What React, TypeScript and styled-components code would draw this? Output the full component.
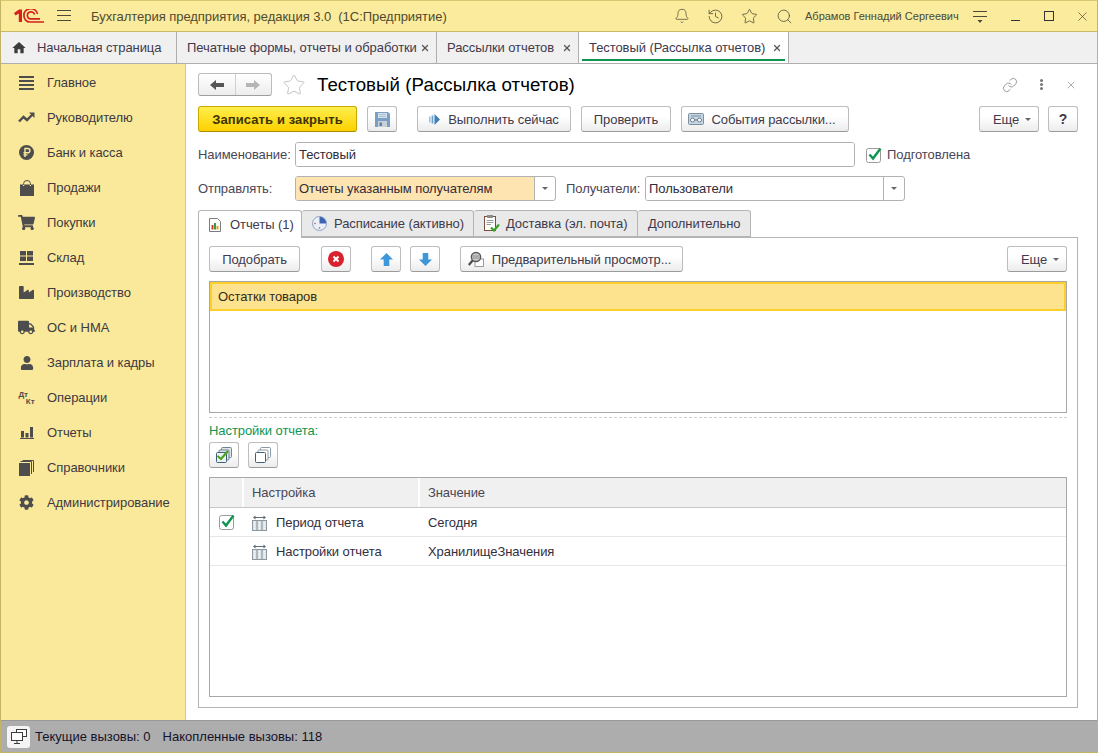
import React from "react";
import styled, { createGlobalStyle } from "styled-components";
import { Bell, History, Star, Search, Link, X } from "lucide-react";
import { FaCog, FaIndustry, FaShoppingCart, FaTruck, FaUser } from "react-icons/fa";
import { MdHome } from "react-icons/md";

const GlobalStyle = createGlobalStyle`
  html, body { margin: 0; padding: 0; background: #fff; }
  body { font-family: "Liberation Sans", Arial, sans-serif; font-size: 13px; letter-spacing: -0.08px; color: #3c3c3c; }
  * { box-sizing: border-box; }
`;

// Small drawings
const Logo1C = () => (
  <svg width="30" height="14" viewBox="0 0 30 14" fill="none">
    <path d="M0 4L5 0.5H8V13H4.8V4.6L1.5 6.6Z" fill="#d4231e" />
    <path d="M23.5 5A6 5.4 0 0 0 10 6.5A6 6 0 0 0 16 13H30" stroke="#d4231e" strokeWidth="1.7" />
    <path d="M20.6 5.5A3.2 2.8 0 0 0 13.4 6.5A3 3.2 0 0 0 16.5 9.8H26" stroke="#d4231e" strokeWidth="1.7" />
  </svg>
);

const Burger = () => (
  <svg width="14" height="12" viewBox="0 0 14 12">
    <path d="M0 .5H14M0 5.5H14M0 10.5H14" stroke="#4a4a3a" />
  </svg>
);

const FilterIcon = () => (
  <svg width="16" height="15" viewBox="0 0 16 15">
    <path d="M1 2.5H15M1 7.5H15" stroke="#4a4a3a" />
    <path d="M5.5 11H10.5L8 14Z" fill="#4a4a3a" />
  </svg>
);

const MenuIcon = () => (
  <svg width="15" height="14" viewBox="0 0 15 14" fill="#4d4d4d">
    <rect y="0" width="15" height="2" /><rect y="4" width="15" height="2" />
    <rect y="8" width="15" height="2" /><rect y="12" width="15" height="2" />
  </svg>
);

const TrendIcon = () => (
  <svg width="17" height="11" viewBox="0 0 17 11" fill="none">
    <path d="M1 9.5L5.5 5L9 8L14.5 2.5" stroke="#4d4d4d" strokeWidth="2.4" />
    <path d="M11 .5H16.5V6Z" fill="#4d4d4d" />
  </svg>
);

const RubleIcon = () => (
  <svg width="15" height="15" viewBox="0 0 15 15">
    <circle cx="7.5" cy="7.5" r="7.5" fill="#4d4d4d" />
    <path d="M6 12V3.5H8.8A2.1 2.1 0 0 1 8.8 7.8H4.5M4.5 9.9H8.5" stroke="#fbe99b" strokeWidth="1.4" fill="none" />
  </svg>
);

const BagIcon = () => (
  <svg width="14" height="16" viewBox="0 0 14 16">
    <path d="M0 4.5H3V6H4.2V4.5H9.8V6H11V4.5H14V16H0Z" fill="#4d4d4d" />
    <path d="M3.6 5V3.5A3.4 3 0 0 1 10.4 3.5V5" stroke="#4d4d4d" fill="none" />
  </svg>
);

const StockIcon = () => (
  <svg width="15" height="14" viewBox="0 0 15 14" fill="#4d4d4d">
    <rect x="1" y="0" width="6" height="4.5" /><rect x="8" y="0" width="6" height="4.5" />
    <rect x="1" y="5.5" width="6" height="4.5" /><rect x="8" y="5.5" width="6" height="4.5" />
    <rect x="0" y="12" width="15" height="2" />
  </svg>
);

const BarsIcon = () => (
  <svg width="14" height="12" viewBox="0 0 14 12" fill="#4d4d4d">
    <rect x="1" y="4" width="3" height="6.5" /><rect x="5.5" y="6" width="3" height="4.5" />
    <rect x="10" y="0" width="3" height="10.5" /><rect x="0" y="11" width="14" height="1" />
  </svg>
);

const PagesIcon = () => (
  <svg width="15" height="16" viewBox="0 0 15 16" fill="none">
    <rect x="0" y="3" width="11" height="13" fill="#4d4d4d" />
    <path d="M1.5 1.5H12.5V14M3.5 .5H14.5V12" stroke="#4d4d4d" />
  </svg>
);

const Floppy = () => (
  <svg width="15" height="15" viewBox="0 0 15 15">
    <path d="M0 0H13L15 2V15H0Z" fill="#7a9fc4" />
    <rect x="3" y="1" width="9" height="5" fill="#d6e2ee" />
    <path d="M4 2.5H11M4 4.5H11" stroke="#a9bfd4" />
    <rect x="3" y="9" width="9" height="6" fill="#c9d0d6" />
    <rect x="4.5" y="10.5" width="2.5" height="3.5" fill="#5f82a6" />
  </svg>
);

const RunIcon = () => (
  <svg width="11" height="11" viewBox="0 0 11 11">
    <rect x="0" y="2.5" width="1.6" height="6" fill="#9cc0de" />
    <rect x="2.6" y="1.5" width="1.8" height="8" fill="#6ea3cf" />
    <path d="M5.5 0L11 5.5L5.5 11Z" fill="#3f7fb8" />
  </svg>
);

const EventsIcon = () => (
  <svg width="16" height="12" viewBox="0 0 16 12">
    <rect x=".5" y=".5" width="15" height="11" rx="1" fill="#c5d6e4" stroke="#7d8e9c" />
    <path d="M3 3H13" stroke="#7d8e9c" />
    <circle cx="4.5" cy="7" r="2" fill="#fff" stroke="#6a7a88" />
    <circle cx="11.5" cy="7" r="2" fill="#fff" stroke="#6a7a88" />
    <path d="M6.5 7H9.5" stroke="#6a7a88" />
  </svg>
);

const DeleteIcon = () => (
  <svg width="16" height="16" viewBox="0 0 16 16">
    <circle cx="8" cy="8" r="8" fill="#d8202f" />
    <path d="M5.5 5.5L10.5 10.5M10.5 5.5L5.5 10.5" stroke="#fff" strokeWidth="2" />
  </svg>
);

const ArrowIcon = ({ down }: { down?: boolean }) => (
  <svg width="13" height="13" viewBox="0 0 14 14">
    <path
      d={down ? "M4 0H10V7H14L7 14L0 7H4Z" : "M4 14H10V7H14L7 0L0 7H4Z"}
      fill="#3d97d8"
    />
  </svg>
);

const PreviewIcon = () => (
  <svg width="16" height="16" viewBox="0 0 16 16" fill="none">
    <rect x="7" y="8" width="8.5" height="7.5" fill="#fff" stroke="#9a9a9a" />
    <circle cx="8" cy="6" r="4.6" fill="#c9ccce" stroke="#5a5a5a" strokeWidth="1.5" />
    <path d="M4.6 9.5L.8 14" stroke="#4a4a4a" strokeWidth="2.2" />
    <path d="M5 5H11M5 7H11" stroke="#8a8a8a" />
  </svg>
);

const CheckStack = () => (
  <svg width="16" height="16" viewBox="0 0 16 16" fill="none">
    <rect x="5.5" y=".5" width="10" height="10" rx="1" fill="#dfe6ea" stroke="#6e8493" />
    <rect x="3" y="3" width="10" height="10" rx="1" fill="#dfe6ea" stroke="#6e8493" />
    <rect x=".5" y="5.5" width="10" height="10" rx="1" fill="#eef2f4" stroke="#3f6076" />
    <path d="M1.5 9L5 12L12 4" stroke="#4aa51d" strokeWidth="2.2" />
  </svg>
);

const EmptyStack = () => (
  <svg width="16" height="16" viewBox="0 0 16 16" fill="#fff">
    <rect x="5.5" y=".5" width="10" height="10" rx="1" stroke="#8a9aa6" />
    <rect x="3" y="3" width="10" height="10" rx="1" stroke="#8a9aa6" />
    <rect x=".5" y="5.5" width="10" height="10" rx="1" stroke="#3f6076" />
  </svg>
);

const ReportTab = () => (
  <svg width="12" height="14" viewBox="0 0 12 14">
    <path d="M.5.5H8.5L11.5 3.5V13.5H.5Z" fill="#fff" stroke="#7c7c7c" />
    <rect x="2.5" y="7" width="2" height="4.5" fill="#d33a2c" />
    <rect x="5" y="5" width="2" height="6.5" fill="#3b9b3f" />
    <rect x="7.5" y="8" width="2" height="3.5" fill="#d8a520" />
  </svg>
);

const ClockTab = () => (
  <svg width="15" height="15" viewBox="0 0 15 15">
    <circle cx="7.5" cy="7.5" r="7" fill="#eaf0f8" stroke="#8da3c6" />
    <path d="M7.5 7.5V.7A6.8 6.8 0 0 1 14.3 7.5Z" fill="#3e63b3" />
    <circle cx="3" cy="7.5" r=".8" fill="#d0424a" />
    <circle cx="7.5" cy="12" r=".8" fill="#d0424a" />
  </svg>
);

const ClipboardTab = () => (
  <svg width="16" height="17" viewBox="0 0 16 17">
    <rect x=".5" y="1.5" width="11" height="14" fill="#fff" stroke="#7a4f3a" />
    <rect x="3" y="0" width="6" height="3" fill="#8c8c8c" />
    <path d="M2.5 5.5H9.5M2.5 7.5H9.5M2.5 9.5H7" stroke="#9a9a9a" />
    <path d="M7 12.5L10 15.5L15 9.5" stroke="#3ba22b" strokeWidth="2.2" fill="none" />
  </svg>
);

const TickBox = () => (
  <svg width="17" height="17" viewBox="0 0 17 17" fill="none">
    <rect x=".5" y="2.5" width="14" height="14" rx="2" fill="#fff" stroke="#9a9a9a" />
    <path d="M3.5 8.5L7 12.5L14.5 2.5" stroke="#0f9550" strokeWidth="2.4" />
  </svg>
);

const ParamIcon = () => (
  <svg width="15" height="16" viewBox="0 0 15 16" fill="none">
    <path d="M2 2.5H13" stroke="#5c6c78" />
    <path d="M1 2.5L3.5 .5V4.5ZM14 2.5L11.5 .5V4.5Z" fill="#5c6c78" />
    <rect x=".5" y="5.5" width="14" height="10" fill="#dfe3e6" stroke="#8d9aa3" />
    <path d="M5 5.5V15.5M10 5.5V15.5" stroke="#7f8c95" />
    <path d="M2.7 7V15M7.5 7V15M12.3 7V15" stroke="#fff" strokeDasharray="1 1" />
  </svg>
);

const ScreensIcon = () => (
  <svg width="16" height="15" viewBox="0 0 16 15" fill="#fff" stroke="#3c3c3c">
    <rect x="5.5" y=".5" width="10" height="7" />
    <rect x=".5" y="3.5" width="11" height="8" />
    <path d="M6 11.5V14M3 14.5H9" />
  </svg>
);

const Caret = () => (
  <svg width="6" height="3" viewBox="0 0 6 3">
    <path d="M0 0H6L3 3Z" fill="#666" />
  </svg>
);

// Layout
const Page = styled.div`
  width: 1098px;
  height: 753px;
  display: flex;
  flex-direction: column;
  overflow: hidden;
  border: 1px solid #c3b463;
  border-top-color: #d8c871;
`;

const TitleBar = styled.header`
  height: 31px;
  flex: none;
  display: flex;
  align-items: center;
  background: #fbeb9c;
  border-bottom: 1px solid #c9b864;
  padding-left: 13px;
  color: #4a4a3a;
`;

const MenuToggle = styled.span`
  margin-left: 13px;
  display: flex;
`;

const AppName = styled.span`
  margin-left: 20px;
  font-size: 13px;
  letter-spacing: -0.04px;
  color: #504a30;
`;

const TitleTools = styled.div`
  margin-left: auto;
  display: flex;
  align-items: center;
`;

const TitleTool = styled.span<{ $w: number }>`
  width: ${(p) => p.$w}px;
  display: flex;
  justify-content: center;
  align-items: center;
`;

const UserName = styled.span`
  width: 170px;
  padding-left: 3px;
  font-size: 11px;
  letter-spacing: 0;
  color: #4a4a3a;
`;

const WinButtons = styled.div`
  display: flex;
  align-items: center;
  gap: 13.5px;
  margin-left: 17px;
  margin-right: 5px;
`;

const WinButton = styled.span`
  width: 20px;
  height: 20px;
  display: flex;
  align-items: center;
  justify-content: center;
`;

const TabBar = styled.nav`
  height: 32px;
  flex: none;
  display: flex;
  background: #f0f0f0;
  border-bottom: 1px solid #aeaeae;
`;

const OpenTab = styled.div<{ $w: number; $active?: boolean }>`
  position: relative;
  width: ${(p) => p.$w}px;
  display: flex;
  align-items: center;
  padding-left: 10px;
  white-space: nowrap;
  border-right: 1px solid #aeaeae;
  color: #403a4c;
  font-size: 13px;
  background: ${(p) => (p.$active ? "#fff" : "transparent")};
  ${(p) =>
    p.$active &&
    `&::after { content: ""; position: absolute; left: 3px; right: 3px; bottom: 2px; height: 2px; background: #0f9550; }`}
`;

const HomeLabel = styled.span`
  margin-left: 10px;
`;

const TabClose = styled.span`
  margin-left: auto;
  margin-right: 6px;
  display: flex;
`;

const Body = styled.div`
  flex: 1;
  min-height: 0;
  display: flex;
`;

const Sidebar = styled.aside`
  width: 185px;
  flex: none;
  background: #fbe99b;
  border-right: 1px solid #d8c871;
  padding-top: 1px;
`;

const SideItem = styled.div`
  height: 35px;
  display: flex;
  align-items: center;
  color: #3d3a42;
  font-size: 13px;
`;

const SideIcon = styled.span`
  width: 46px;
  padding-left: 5px;
  display: flex;
  justify-content: center;
  align-items: center;
  color: #4d4d4d;
`;

const DebitCredit = styled.span`
  display: flex;
  flex-direction: column;
  font-size: 8px;
  line-height: 7px;
  font-weight: bold;
  width: 16px;
  span:last-child { align-self: flex-end; }
`;

const Main = styled.main`
  flex: 1;
  min-width: 0;
  display: flex;
  flex-direction: column;
  padding: 9px 19px 12px 12px;
  background: #fff;
`;

const FormHeader = styled.div`
  height: 23px;
  display: flex;
  align-items: center;
  margin-bottom: 10px;
`;

const NavGroup = styled.div`
  width: 74px;
  height: 23px;
  display: flex;
  border: 1px solid #bcbcbc;
  border-bottom-color: #9d9d9d;
  border-radius: 3px;
  background: linear-gradient(#fff, #ededed);
`;

const NavPart = styled.span<{ $right?: boolean }>`
  flex: 1;
  display: flex;
  align-items: center;
  justify-content: center;
  border-left: ${(p) => (p.$right ? "1px solid #d0d0d0" : "none")};
`;

const FormTitle = styled.h1`
  margin: 0 0 0 1px;
  font-size: 18.67px;
  font-weight: normal;
  color: #000;
  letter-spacing: 0.07px;
`;

const FormTools = styled.div`
  margin-left: auto;
  display: flex;
  align-items: center;
  color: #777;
`;

const FormTool = styled.span<{ $w: number }>`
  width: ${(p) => p.$w}px;
  display: flex;
  justify-content: center;
`;

const Dots = styled.span`
  width: 3px;
  height: 3px;
  background: #777;
  box-shadow: 0 -4px 0 #777, 0 4px 0 #777;
  border-radius: 50%;
`;

const Toolbar = styled.div`
  height: 26px;
  flex: none;
  display: flex;
  gap: 10px;
`;

const Btn = styled.button<{ $w: number; $ml?: string; $pr?: number }>`
  width: ${(p) => p.$w}px;
  height: 26px;
  flex: none;
  padding: 0 ${(p) => p.$pr || 0}px 0 0;
  margin-left: ${(p) => p.$ml || "0"};
  display: flex;
  align-items: center;
  justify-content: center;
  gap: 8px;
  font-family: inherit;
  font-size: 13px;
  letter-spacing: inherit;
  color: #403a4c;
  border: 1px solid #bdbdbd;
  border-bottom-color: #9b9b9b;
  border-radius: 3px;
  background: linear-gradient(#fff 40%, #ececec);
`;

const PrimaryBtn = styled(Btn)`
  font-weight: bold;
  letter-spacing: 0.1px;
  color: #3d3300;
  border-color: #c9a800;
  border-bottom-color: #a88c00;
  background: linear-gradient(#ffee4d, #fdd100);
`;

const MoreBtn = styled(Btn)`
  padding-left: 6px;
  gap: 6px;
`;

const HelpMark = styled.span`
  font-weight: bold;
  font-size: 14px;
`;

const FieldRow = styled.div`
  height: 25px;
  flex: none;
  display: flex;
  align-items: center;
  margin-top: 10px;
`;

const FieldRowNext = styled(FieldRow)`
  margin-top: 9px;
`;

const FieldLabel = styled.span<{ $w: number; $ml?: number }>`
  width: ${(p) => p.$w}px;
  margin-left: ${(p) => p.$ml || 0}px;
  flex: none;
  color: #4a4656;
  white-space: nowrap;
`;

const Input = styled.div<{ $w: number }>`
  width: ${(p) => p.$w}px;
  height: 25px;
  flex: none;
  display: flex;
  align-items: stretch;
  border: 1px solid #b2b2b2;
  border-radius: 3px;
  overflow: hidden;
  background: #fff;
`;

const InputValue = styled.span<{ $bg?: string }>`
  flex: 1;
  display: flex;
  align-items: center;
  padding-left: 3px;
  color: #302c3a;
  background: ${(p) => p.$bg || "#fff"};
`;

const DropBtn = styled.span`
  width: 21px;
  display: flex;
  align-items: center;
  justify-content: center;
  border-left: 1px solid #b2b2b2;
`;

const CheckWrap = styled.span`
  margin-left: 11px;
  display: flex;
  align-items: center;
  gap: 4px;
  color: #4a4656;
`;

const FormTabs = styled.div`
  height: 27px;
  flex: none;
  margin-top: 9px;
  display: flex;
`;

const FormTab = styled.div<{ $w: number; $gap?: number; $active?: boolean }>`
  width: ${(p) => p.$w}px;
  height: ${(p) => (p.$active ? 28 : 27)}px;
  display: flex;
  align-items: center;
  gap: ${(p) => p.$gap ?? 8}px;
  padding-left: 10px;
  color: #403a4c;
  background: ${(p) => (p.$active ? "#fff" : "#e9e9e9")};
  border: 1px solid #b4b4b4;
  border-left-width: ${(p) => (p.$active ? 1 : 0)}px;
  border-bottom-width: ${(p) => (p.$active ? 0 : 1)}px;
  border-radius: 3px 3px 0 0;
  position: relative;
  z-index: ${(p) => (p.$active ? 1 : 0)};
`;

const Panel = styled.section`
  flex: 1;
  min-height: 0;
  display: flex;
  flex-direction: column;
  border: 1px solid #b4b4b4;
  padding: 8px 10px 10px;
`;

const ListTable = styled.div`
  height: 132px;
  flex: none;
  margin-top: 9px;
  border: 1px solid #a8a8a8;
`;

const SelectedRow = styled.div`
  height: 29px;
  display: flex;
  align-items: center;
  padding-left: 6px;
  background: #fee38e;
  border: 2px solid #fccf2c;
  color: #322c20;
`;

const Splitter = styled.div`
  flex: none;
  height: 0;
  margin-top: 4px;
  border-top: 1px dashed #cfcfcf;
`;

const GroupLabel = styled.div`
  height: 14px;
  flex: none;
  margin-top: 6px;
  line-height: 14px;
  color: #0f9550;
`;

const SmallBar = styled(Toolbar)`
  margin-top: 4px;
  gap: 9px;
`;

const Grid = styled.div`
  flex: 1;
  min-height: 0;
  margin-top: 9px;
  border: 1px solid #a8a8a8;
`;

const GridRow = styled.div<{ $head?: boolean }>`
  height: ${(p) => (p.$head ? 30 : 29)}px;
  display: grid;
  grid-template-columns: 34px 176px 1fr;
  border-bottom: 1px solid ${(p) => (p.$head ? "#c8c8c8" : "#e6e6e6")};
  color: #322e3c;
`;

const HeadCell = styled.div`
  display: flex;
  align-items: center;
  padding: 0 0 1px 8px;
  background: #f0f0f0;
  color: #4a4656;
  border-right: 2px solid #fff;
  &:last-child { border-right: 0; }
`;

const Cell = styled.div`
  display: flex;
  align-items: center;
  padding: 1px 0 0 8px;
  gap: 9px;
`;

const CheckCell = styled(Cell)`
  padding: 0 0 2px 9px;
`;

const StatusBar = styled.footer`
  height: 32px;
  flex: none;
  display: flex;
  align-items: center;
  padding-left: 6px;
  gap: 5px;
  background: #adadad;
  border-top: 1px solid #999;
  color: #16122a;
  letter-spacing: 0;
`;

const StatusBtn = styled.span`
  width: 23px;
  height: 22px;
  display: flex;
  align-items: center;
  justify-content: center;
  background: #f4f4f4;
  border-radius: 3px;
`;

const StatusText = styled.span<{ $ml?: number }>`
  margin-left: ${(p) => p.$ml || 0}px;
`;

const nav: [string, React.ReactNode][] = [
  ["Главное", <MenuIcon />],
  ["Руководителю", <TrendIcon />],
  ["Банк и касса", <RubleIcon />],
  ["Продажи", <BagIcon />],
  ["Покупки", <FaShoppingCart size={17} />],
  ["Склад", <StockIcon />],
  ["Производство", <FaIndustry size={15} />],
  ["ОС и НМА", <FaTruck size={17} />],
  ["Зарплата и кадры", <FaUser size={14} />],
  [
    "Операции",
    <DebitCredit>
      <span>Дт</span>
      <span>Кт</span>
    </DebitCredit>,
  ],
  ["Отчеты", <BarsIcon />],
  ["Справочники", <PagesIcon />],
  ["Администрирование", <FaCog size={15} />],
];

export default function App() {
  return (
    <Page>
      <GlobalStyle />
      <TitleBar>
        <Logo1C />
        <MenuToggle>
          <Burger />
        </MenuToggle>
        <AppName>Бухгалтерия предприятия, редакция 3.0&nbsp; (1С:Предприятие)</AppName>
        <TitleTools>
          <TitleTool $w={34}><Bell size={16} strokeWidth={1.1} /></TitleTool>
          <TitleTool $w={33}><History size={17} strokeWidth={1.1} /></TitleTool>
          <TitleTool $w={34}><Star size={17} strokeWidth={1.1} /></TitleTool>
          <TitleTool $w={36}><Search size={17} strokeWidth={1.1} /></TitleTool>
          <UserName>Абрамов Геннадий Сергеевич</UserName>
          <FilterIcon />
          <WinButtons>
            <WinButton><svg width="9" height="9" viewBox="0 0 9 9"><path d="M0 8.5H9" stroke="#333" /></svg></WinButton>
            <WinButton><svg width="10" height="10" viewBox="0 0 10 10"><rect x=".5" y=".5" width="9" height="9" fill="none" stroke="#333" /></svg></WinButton>
            <WinButton><X size={15} strokeWidth={1} color="#333" /></WinButton>
          </WinButtons>
        </TitleTools>
      </TitleBar>

      <TabBar>
        <OpenTab $w={176}>
          <MdHome size={16} color="#3c3c3c" />
          <HomeLabel>Начальная страница</HomeLabel>
        </OpenTab>
        <OpenTab $w={260}>
          Печатные формы, отчеты и обработки
          <TabClose><X size={10} strokeWidth={3} color="#555" /></TabClose>
        </OpenTab>
        <OpenTab $w={142}>
          Рассылки отчетов
          <TabClose><X size={10} strokeWidth={3} color="#555" /></TabClose>
        </OpenTab>
        <OpenTab $w={210} $active>
          Тестовый (Рассылка отчетов)
          <TabClose><X size={10} strokeWidth={3} color="#555" /></TabClose>
        </OpenTab>
      </TabBar>

      <Body>
        <Sidebar>
          {nav.map(([label, icon]) => (
            <SideItem key={label}>
              <SideIcon>{icon}</SideIcon>
              {label}
            </SideItem>
          ))}
        </Sidebar>

        <Main>
          <FormHeader>
            <NavGroup>
              <NavPart>
                <svg width="14" height="10" viewBox="0 0 14 10"><path d="M0 5L6 0V3H14V7H6V10Z" fill="#555" /></svg>
              </NavPart>
              <NavPart $right>
                <svg width="14" height="10" viewBox="0 0 14 10"><path d="M14 5L8 0V3H0V7H8V10Z" fill="#b5b5b5" /></svg>
              </NavPart>
            </NavGroup>
            <FormTool $w={44}>
              <Star size={24} strokeWidth={1} color="#c4c4c4" />
            </FormTool>
            <FormTitle>Тестовый (Рассылка отчетов)</FormTitle>
            <FormTools>
              <FormTool $w={16}><Link size={16} strokeWidth={1.1} /></FormTool>
              <FormTool $w={46}><Dots /></FormTool>
              <FormTool $w={14}><X size={12} strokeWidth={1.2} /></FormTool>
            </FormTools>
          </FormHeader>

          <Toolbar>
            <PrimaryBtn $w={159}>Записать и закрыть</PrimaryBtn>
            <Btn $w={30}><Floppy /></Btn>
            <Btn $w={154} $ml="10px"><RunIcon />Выполнить сейчас</Btn>
            <Btn $w={90}>Проверить</Btn>
            <Btn $w={168} $pr={7}><EventsIcon />События рассылки...</Btn>
            <MoreBtn $w={60} $ml="auto">Еще <Caret /></MoreBtn>
            <Btn $w={30} $ml="-1px"><HelpMark>?</HelpMark></Btn>
          </Toolbar>

          <FieldRow>
            <FieldLabel $w={97}>Наименование:</FieldLabel>
            <Input $w={560}><InputValue>Тестовый</InputValue></Input>
            <CheckWrap><TickBox />Подготовлена</CheckWrap>
          </FieldRow>

          <FieldRowNext>
            <FieldLabel $w={97}>Отправлять:</FieldLabel>
            <Input $w={261}>
              <InputValue $bg="#fee4b0">Отчеты указанным получателям</InputValue>
              <DropBtn><Caret /></DropBtn>
            </Input>
            <FieldLabel $w={79} $ml={10}>Получатели:</FieldLabel>
            <Input $w={260}>
              <InputValue>Пользователи</InputValue>
              <DropBtn><Caret /></DropBtn>
            </Input>
          </FieldRowNext>

          <FormTabs>
            <FormTab $w={104} $gap={9} $active><ReportTab />Отчеты (1)</FormTab>
            <FormTab $w={172} $gap={7}><ClockTab />Расписание (активно)</FormTab>
            <FormTab $w={164} $gap={6}><ClipboardTab />Доставка (эл. почта)</FormTab>
            <FormTab $w={113}>Дополнительно</FormTab>
          </FormTabs>

          <Panel>
            <Toolbar>
              <Btn $w={91}>Подобрать</Btn>
              <Btn $w={30} $ml="11px"><DeleteIcon /></Btn>
              <Btn $w={30} $ml="10px"><ArrowIcon /></Btn>
              <Btn $w={30} $ml="-1px"><ArrowIcon down /></Btn>
              <Btn $w={223} $ml="10px" $pr={4}><PreviewIcon />Предварительный просмотр...</Btn>
              <MoreBtn $w={60} $ml="auto">Еще <Caret /></MoreBtn>
            </Toolbar>

            <ListTable>
              <SelectedRow>Остатки товаров</SelectedRow>
            </ListTable>

            <Splitter />
            <GroupLabel>Настройки отчета:</GroupLabel>
            <SmallBar>
              <Btn $w={30}><CheckStack /></Btn>
              <Btn $w={30}><EmptyStack /></Btn>
            </SmallBar>

            <Grid>
              <GridRow $head>
                <HeadCell />
                <HeadCell>Настройка</HeadCell>
                <HeadCell>Значение</HeadCell>
              </GridRow>
              <GridRow>
                <CheckCell><TickBox /></CheckCell>
                <Cell><ParamIcon />Период отчета</Cell>
                <Cell>Сегодня</Cell>
              </GridRow>
              <GridRow>
                <Cell />
                <Cell><ParamIcon />Настройки отчета</Cell>
                <Cell>ХранилищеЗначения</Cell>
              </GridRow>
            </Grid>
          </Panel>
        </Main>
      </Body>

      <StatusBar>
        <StatusBtn><ScreensIcon /></StatusBtn>
        <StatusText>Текущие вызовы: 0</StatusText>
        <StatusText $ml={7}>Накопленные вызовы: 118</StatusText>
      </StatusBar>
    </Page>
  );
}
